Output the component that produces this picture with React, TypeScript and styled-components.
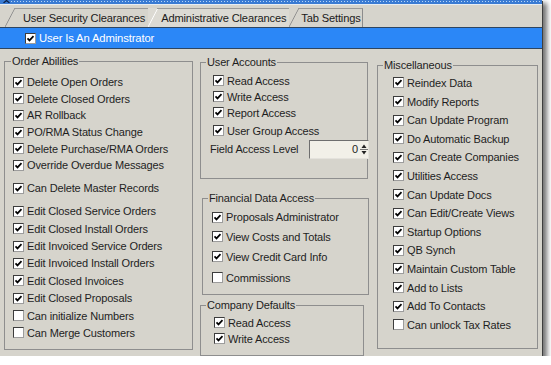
import React from "react"
import styled, { createGlobalStyle } from "styled-components"

const GlobalStyle = createGlobalStyle`
  html, body {
    margin: 0;
    padding: 0;
    background: #ffffff;
  }
  body {
    font-family: "Liberation Sans", Arial, sans-serif;
    font-size: 11px;
    color: #1e1e1e;
  }
`

const Window = styled.div`
  width: 542px;
  height: 356px;
  box-sizing: border-box;
  background: #d6d4cc;
  display: flex;
  flex-direction: column;
  overflow: hidden;
  box-shadow: 1px 1px 0 #3e3e3e, 4px 4px 5px 1px rgba(0, 0, 0, 0.55);
  letter-spacing: -0.15px;
`

const TitleEdge = styled.div`
  position: relative;
  height: 5px;
  flex: 0 0 5px;
  background-color: #3a7bd3;
  box-shadow: inset 0 -1px 0 #e8edf2;
`

const Dots = styled.div`
  position: absolute;
  left: 11px;
  right: 0;
  top: 1px;
  height: 1px;
  background-image: repeating-linear-gradient(90deg, #b8d6f7 0 1px, transparent 1px 3px);
`

const Caret = styled.svg`
  position: absolute;
  left: 3px;
  top: 0;
`

const TabStrip = styled.div`
  height: 22px;
  flex: none;
  display: flex;
  align-items: flex-end;
  padding-left: 5px;
`

const Tab = styled.div<{ $pad: number; $active?: boolean; $last?: boolean }>`
  position: relative;
  height: 19px;
  box-sizing: border-box;
  display: flex;
  align-items: center;
  padding: 1px ${p => (p.$last ? 2 : 3)}px 0 ${p => p.$pad}px;
  font-size: 11.1px;
  color: #1a1a1a;
  white-space: nowrap;
  background: ${p => (p.$active ? "#dcdad3" : "transparent")};

  &::before {
    content: "";
    position: absolute;
    left: 0;
    top: 0;
    bottom: 0;
    width: 10px;
    background: linear-gradient(
      to bottom right,
      transparent calc(50% - 0.8px),
      ${p => (p.$active ? "#ffffff" : "#8c8c8c")} 50%,
      transparent calc(50% + 0.8px)
    );
  }

  &::after {
    content: "";
    position: absolute;
    left: 9px;
    right: 0;
    top: 0;
    bottom: 0;
    border-top: 1px solid #9a9a9a;
    border-right: ${p => (p.$last ? "1px solid #8c8c8c" : "none")};
    pointer-events: none;
  }
`

const AdminBar = styled.label`
  height: 22px;
  flex: none;
  box-sizing: border-box;
  display: flex;
  align-items: center;
  gap: 3px;
  padding-left: 25px;
  background: #2b87f7;
  border-top: 1px solid #2e4560;
  border-bottom: 1px solid #2e4560;
  color: #ffffff;
  font-size: 11.3px;
`

const Content = styled.div`
  display: flex;
  align-items: flex-start;
  padding-left: 4px;
`

const Column = styled.div<{ $ml?: number; $mt?: number; $w: number }>`
  display: flex;
  flex-direction: column;
  width: ${p => p.$w}px;
  margin-left: ${p => p.$ml ?? 0}px;
  margin-top: ${p => p.$mt ?? 0}px;
`

const Group = styled.fieldset<{ $w: number; $h: number; $ml?: number; $mt?: number }>`
  box-sizing: border-box;
  width: ${p => p.$w}px;
  height: ${p => p.$h}px;
  margin: ${p => p.$mt ?? 0}px 0 0 ${p => p.$ml ?? 0}px;
  padding: 0;
  border: 1px solid #8e8e8e;
  min-width: 0;
`

const Legend = styled.legend<{ $ml?: number }>`
  font-size: 11px;
  line-height: 13px;
  padding: 0 1px;
  margin-left: ${p => p.$ml ?? 5}px;
  color: #1e1e1e;
`

const Rows = styled.div<{ $pt: number; $pl: number }>`
  display: flex;
  flex-direction: column;
  padding: ${p => p.$pt}px 0 0 ${p => p.$pl}px;
`

const Row = styled.label<{ $h: number; $mt?: number }>`
  display: flex;
  align-items: center;
  gap: 3px;
  height: ${p => p.$h}px;
  margin-top: ${p => p.$mt ?? 0}px;
  white-space: nowrap;
`

const BoxFrame = styled.span`
  width: 11px;
  height: 11px;
  flex: none;
  box-sizing: border-box;
  display: inline-flex;
  background: #ffffff;
  border: 1px solid;
  border-color: #3c3c3c #9c9c9c #9c9c9c #3c3c3c;
`

const FieldRow = styled.div`
  display: flex;
  align-items: center;
  height: 19px;
  margin-top: 1px;
  padding-left: 9px;
`

const FieldLabel = styled.span`
  width: 99px;
  flex: none;
`

const Spinner = styled.div`
  width: 60px;
  height: 19px;
  box-sizing: border-box;
  flex: none;
  display: flex;
  background: #f2f0e8;
  border: 1px solid;
  border-color: #6e6e6e #e4e2dc #e4e2dc #6e6e6e;
`

const SpinValue = styled.span`
  flex: 1;
  display: flex;
  align-items: center;
  justify-content: flex-end;
  padding-right: 2px;
`

const SpinArrows = styled.span`
  width: 8px;
  display: flex;
  flex-direction: column;
  justify-content: center;
`

function Box({ checked }: { checked?: boolean }) {
  return (
    <BoxFrame>
      {checked && (
        <svg width="9" height="9" viewBox="0 0 9 9">
          <polyline points="1.5,4.3 3.5,6.4 7.5,2.2" fill="none" stroke="#000" strokeWidth="1.7" />
        </svg>
      )}
    </BoxFrame>
  )
}

function Check({ label, checked = true, h, mt }: { label: string; checked?: boolean; h: number; mt?: number }) {
  return (
    <Row $h={h} $mt={mt}>
      <Box checked={checked} />
      <span>{label}</span>
    </Row>
  )
}

const orderA = [
  "Delete Open Orders",
  "Delete Closed Orders",
  "AR Rollback",
  "PO/RMA Status Change",
  "Delete Purchase/RMA Orders",
  "Override Overdue Messages",
]

const orderC: [string, boolean][] = [
  ["Edit Closed Service Orders", true],
  ["Edit Closed Install Orders", true],
  ["Edit Invoiced Service Orders", true],
  ["Edit Invoiced Install Orders", true],
  ["Edit Closed Invoices", true],
  ["Edit Closed Proposals", true],
  ["Can initialize Numbers", false],
  ["Can Merge Customers", false],
]

const misc: [string, boolean][] = [
  ["Reindex Data", true],
  ["Modify Reports", true],
  ["Can Update Program", true],
  ["Do Automatic Backup", true],
  ["Can Create Companies", true],
  ["Utilities Access", true],
  ["Can Update Docs", true],
  ["Can Edit/Create Views", true],
  ["Startup Options", true],
  ["QB Synch", true],
  ["Maintain Custom Table", true],
  ["Add to Lists", true],
  ["Add To Contacts", true],
  ["Can unlock Tax Rates", false],
]

export default function App() {
  return (
    <>
      <GlobalStyle />
      <Window>
        <TitleEdge>
          <Caret width="7" height="3" viewBox="0 0 7 3">
            <polyline points="0.5,3 3.5,0.5 6.5,3" fill="none" stroke="#0b1f44" strokeWidth="1.2" />
          </Caret>
          <Dots />
        </TitleEdge>
        <TabStrip>
          <Tab $pad={18}>User Security Clearances</Tab>
          <Tab $pad={13} $active>
            Administrative Clearances
          </Tab>
          <Tab $pad={12} $last>
            Tab Settings
          </Tab>
        </TabStrip>
        <AdminBar>
          <Box checked />
          <span>User Is An Adminstrator</span>
        </AdminBar>
        <Content>
          <Column $w={189} $mt={6}>
            <Group $w={189} $h={295}>
              <Legend $ml={6}>Order Abilities</Legend>
              <Rows $pt={6} $pl={8}>
                {orderA.map(t => (
                  <Check key={t} label={t} h={16.6} />
                ))}
                <Check label="Can Delete Master Records" h={16.6} mt={6.4} />
                {orderC.map(([t, c], i) => (
                  <Check key={t} label={t} checked={c} h={17.4} mt={i === 0 ? 6 : 0} />
                ))}
              </Rows>
            </Group>
          </Column>
          <Column $w={169} $ml={7} $mt={7}>
            <Group $w={168} $h={123}>
              <Legend>User Accounts</Legend>
              <Rows $pt={3.5} $pl={12}>
                <Check label="Read Access" h={16} />
                <Check label="Write Access" h={16} />
                <Check label="Report Access" h={16} />
                <Check label="User Group Access" h={16} mt={2} />
              </Rows>
              <FieldRow>
                <FieldLabel>Field Access Level</FieldLabel>
                <Spinner>
                  <SpinValue>0</SpinValue>
                  <SpinArrows>
                    <svg width="8" height="17" viewBox="0 0 8 17">
                      <polygon points="1.5,7 4,3.5 6.5,7" fill="#222" />
                      <line x1="0" y1="8.5" x2="8" y2="8.5" stroke="#777" />
                      <polygon points="1.5,10 4,13.5 6.5,10" fill="#222" />
                    </svg>
                  </SpinArrows>
                </Spinner>
              </FieldRow>
            </Group>
            <Group $w={167} $h={103} $ml={2} $mt={13}>
              <Legend>Financial Data Access</Legend>
              <Rows $pt={2.5} $pl={9}>
                <Check label="Proposals Administrator" h={19.5} />
                <Check label="View Costs and Totals" h={19.5} />
                <Check label="View Credit Card Info" h={20.5} />
                <Check label="Commissions" checked={false} h={21} />
              </Rows>
            </Group>
            <Group $w={164} $h={57} $mt={4}>
              <Legend>Company Defaults</Legend>
              <Rows $pt={2.5} $pl={13}>
                <Check label="Read Access" h={16} />
                <Check label="Write Access" h={16} />
              </Rows>
            </Group>
          </Column>
          <Column $w={161} $ml={8} $mt={9.5}>
            <Group $w={161} $h={290}>
              <Legend>Miscellaneous</Legend>
              <Rows $pt={2.2} $pl={15}>
                {misc.map(([t, c]) => (
                  <Check key={t} label={t} checked={c} h={18.6} />
                ))}
              </Rows>
            </Group>
          </Column>
        </Content>
      </Window>
    </>
  )
}
